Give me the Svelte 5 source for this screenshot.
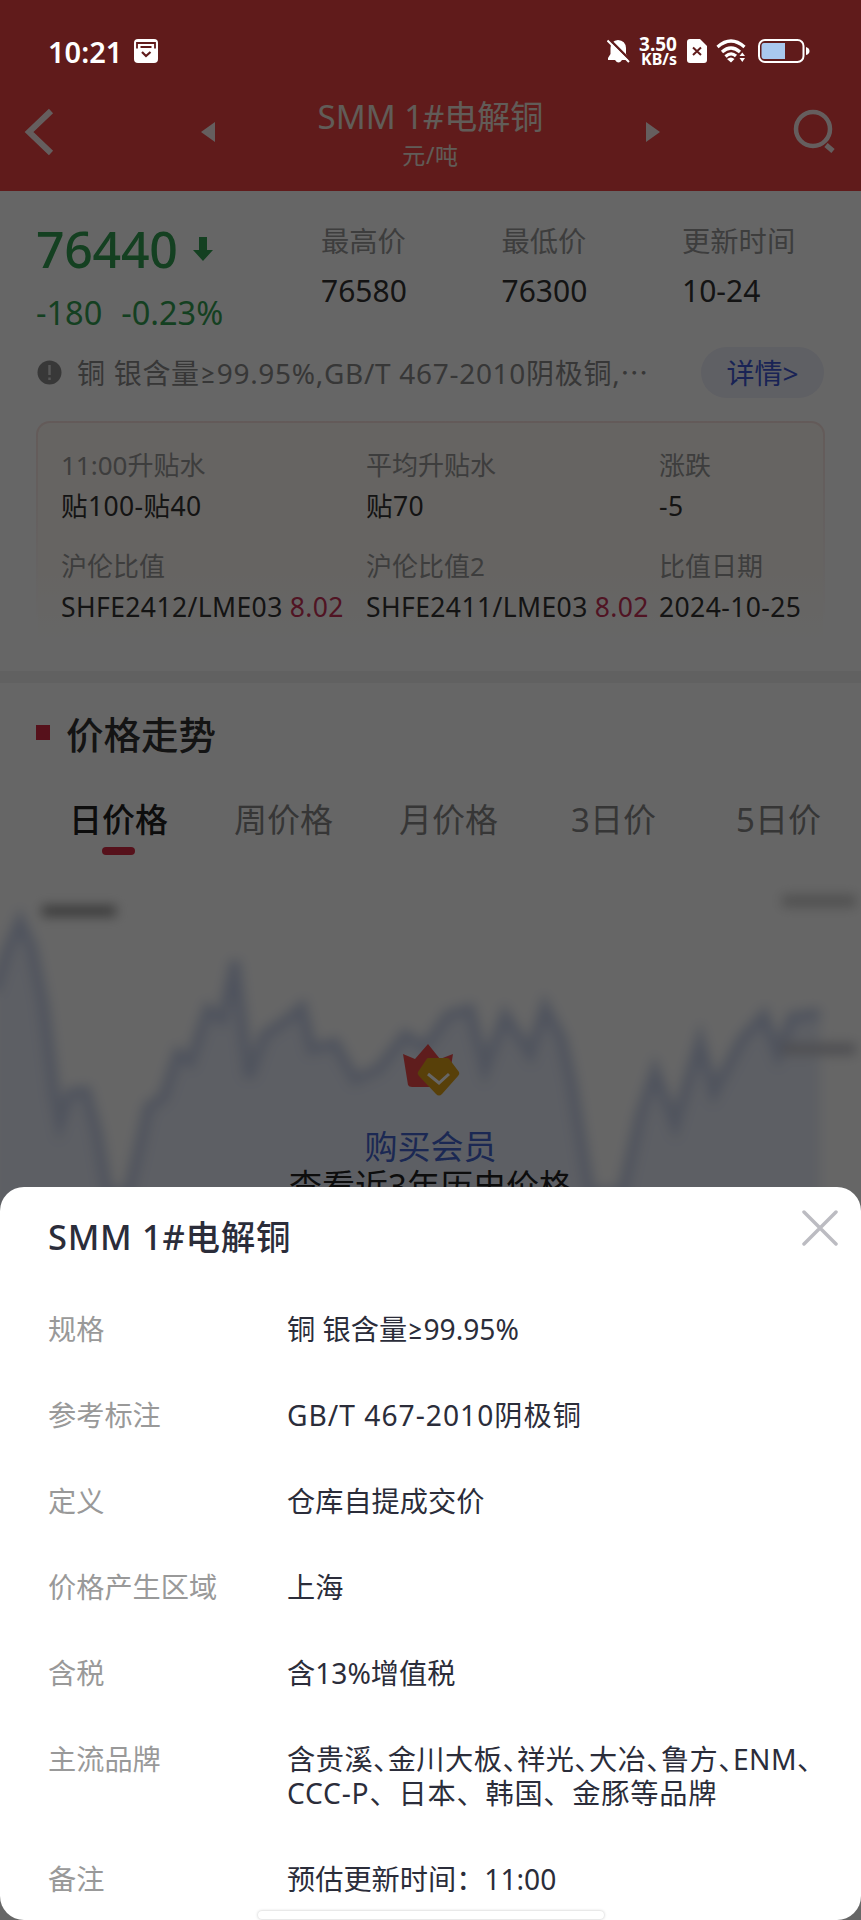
<script lang="ts">
  const stats = [
    { label: '最高价', value: '76580' },
    { label: '最低价', value: '76300' },
    { label: '更新时间', value: '10-24' }
  ];

  const premiums = [
    { label: '11:00升贴水', value: '贴100-贴40' },
    { label: '平均升贴水', value: '贴70' },
    { label: '涨跌', value: '-5' },
    { label: '沪伦比值', value: 'SHFE2412/LME03', ratio: '8.02' },
    { label: '沪伦比值2', value: 'SHFE2411/LME03', ratio: '8.02' },
    { label: '比值日期', value: '2024-10-25' }
  ];

  const tabs = ['日价格', '周价格', '月价格', '3日价', '5日价'];
  let activeTab = $state('日价格');

  const details = [
    { label: '规格', value: '铜 银含量≥99.95%' },
    { label: '参考标注', value: 'GB/T 467-2010阴极铜', wide: true },
    { label: '定义', value: '仓库自提成交价' },
    { label: '价格产生区域', value: '上海' },
    { label: '含税', value: '含13%增值税' }
  ];

  const brands = ['含贵溪', '金川大板', '祥光', '大冶', '鲁方', 'ENM'];

  // 走势图折线
  const line =
    'M-6 110 L6 72 L20 40 L32 66 L44 125 L55 215 L60 240 L70 212 L86 210 L97 250 L108 312 L128 312 L138 270 L148 226 L163 216 L178 172 L190 180 L208 128 L222 138 L235 80 L249 196 L264 154 L285 140 L302 126 L312 168 L335 162 L355 198 L378 188 L405 154 L425 166 L448 134 L470 128 L485 186 L505 134 L530 172 L545 126 L562 158 L572 202 L590 312 L622 312 L640 234 L655 190 L675 242 L700 160 L714 210 L742 158 L764 134 L778 172 L792 136 L820 132';
</script>

<div class="phone">
  <div class="page">
    <header class="header">
      <svg class="back" width="30" height="48" viewBox="0 0 30 48"><path d="M27 3 L5 24 L27 45" fill="none" stroke="#fff" stroke-width="6" /></svg>
      <svg class="prev" width="16" height="22" viewBox="0 0 16 22"><path d="M15 1 V21 L1 11 Z" fill="#fff" /></svg>
      <div class="heading">
        <div class="name">SMM 1#电解铜</div>
        <div class="unit">元/吨</div>
      </div>
      <svg class="next" width="16" height="22" viewBox="0 0 16 22"><path d="M1 1 V21 L15 11 Z" fill="#fff" /></svg>
      <svg class="search" width="42" height="46" viewBox="0 0 42 46">
        <circle cx="20" cy="20" r="17" fill="none" stroke="#fff" stroke-width="4.5" />
        <path d="M33 36 L40 42" stroke="#fff" stroke-width="5" />
      </svg>
    </header>

    <section class="quote">
      <div class="price-box">
        <div class="price">
          76440
          <svg width="20" height="24" viewBox="0 0 20 24"><path d="M6 0 H14 V13 H20 L10 24 L0 13 H6 Z" fill="currentColor" /></svg>
        </div>
        <div class="change"><span>-180</span><span>-0.23%</span></div>
      </div>
      {#each stats as stat}
        <div class="stat">
          <div class="stat-label">{stat.label}</div>
          <div class="stat-value">{stat.value}</div>
        </div>
      {/each}
    </section>

    <div class="note">
      <svg width="25" height="25" viewBox="0 0 25 25">
        <circle cx="12.5" cy="12.5" r="12" fill="#8c8c8c" />
        <path d="M12.5 5 V15 M12.5 17.5 V20" stroke="#ddd" stroke-width="2.4" />
      </svg>
      <div class="note-text">铜 银含量≥99.95%,GB/T 467-2010阴极铜,⋯</div>
      <button class="more">详情&gt;</button>
    </div>

    <section class="premium">
      {#each premiums as item}
        <div class="cell">
          <div class="cell-label">{item.label}</div>
          <div class="cell-value">
            {item.value}{#if item.ratio}<span class="ratio">{item.ratio}</span>{/if}
          </div>
        </div>
      {/each}
    </section>

    <div class="divider"></div>

    <section class="trend">
      <h2>价格走势</h2>
      <div class="tabs">
        {#each tabs as tab}
          <button class="tab" class:active={tab === activeTab} onclick={() => (activeTab = tab)}>{tab}</button>
        {/each}
      </div>
      <div class="chart">
        <svg class="plot" width="861" height="330" viewBox="0 0 861 330">
          <defs>
            <filter id="soft" x="-5%" y="-5%" width="110%" height="110%"><feGaussianBlur stdDeviation="6" /></filter>
          </defs>
          <g filter="url(#soft)">
            <path d="{line} V345 H-6 Z" fill="#e2e8f8" opacity="0.8" />
            <path d={line} fill="none" stroke="#a9b8de" stroke-width="11" opacity="0.6" />
            <rect x="42" y="25" width="74" height="10" fill="#888" />
            <rect x="782" y="14" width="74" height="12" fill="#c8c8c8" />
            <rect x="782" y="162" width="74" height="12" fill="#c4c4cc" />
          </g>
        </svg>
        <div class="vip">
          <svg width="58" height="54" viewBox="0 0 58 54">
            <path d="M1 11 L13 16 L26 1 L38 16 L51 11 L46 42 Q45 44 43 44 H10 Q7 44 6 42 Z" fill="#ee4a4a" />
            <path d="M26 15 H45 Q47 15 48 17 L57 29 Q58 31 56 33 L40 51 Q37 54 34 51 L17 33 Q15 31 16 29 L24 17 Q25 15 26 15 Z" fill="#dca018" />
            <path d="M26 31 L37 40 L47 31" fill="none" stroke="#fff" stroke-width="3" />
          </svg>
          <div class="buy">购买会员</div>
          <div class="history">查看近3年历史价格</div>
        </div>
      </div>
    </section>
    <div class="scrim"></div>
  </div>

  <div class="status">
    <span class="time">10:21</span>
    <svg class="app" width="24" height="24" viewBox="0 0 24 24">
      <rect width="24" height="24" rx="4" fill="#fff" />
      <path d="M3 9.5 V4 H21 V9.5 M6.500 8 H17.500" fill="none" stroke="#601b1b" stroke-width="1.8" />
      <path d="M8 13 L12 17 L16.500 13" fill="none" stroke="#601b1b" stroke-width="2.2" />
    </svg>
    <svg class="bell" width="23" height="25" viewBox="0 0 23 25">
      <path d="M11 1 Q18.500 1.500 19 9 V15 L21.500 19 V21 H15 Q11.500 26 8 21 H1 V19 L3.500 15 V9 Q4 1.500 11 1 Z" fill="#fff" />
      <path d="M2 0 L24 22" stroke="#601b1b" stroke-width="2.500" />
      <path d="M0.500 1.500 L22 23" stroke="#fff" stroke-width="2" />
    </svg>
    <span class="speed"><b>3.50</b><i>KB/s</i></span>
    <svg class="sim" width="20" height="24" viewBox="0 0 20 24">
      <path d="M3 0 H13 L20 7 V21 Q20 24 17 24 H3 Q0 24 0 21 V3 Q0 0 3 0 Z" fill="#fff" />
      <path d="M6 8.500 L14 16 M14 8.500 L6 16" stroke="#601b1b" stroke-width="2" />
    </svg>
    <svg class="wifi" width="30" height="24" viewBox="0 0 30 24">
      <path d="M1.500 8 Q15 -4 28.500 8 M6 13 Q15 5 24 13 M9.500 17.500 Q15 12.500 20 17" fill="none" stroke="#fff" stroke-width="3.200" />
      <path d="M11 20 Q15 17 18.500 20 L15 23.500 Z M23.500 17 L26.300 13.500 L29 17 Z M23.500 19 L26.300 23 L29 19 Z" fill="#fff" />
    </svg>
    <svg class="battery" width="52" height="24" viewBox="0 0 52 24">
      <rect x="1" y="1" width="44.500" height="22" rx="6" fill="none" stroke="#fff" stroke-width="2" />
      <path d="M6 4 H27 V20 H6 Q3.500 20 3.500 17 V7 Q3.500 4 6 4 Z" fill="#a9c8ee" />
      <path d="M48 8 Q51.500 9 51.500 12 Q51.500 15 48 16 Z" fill="#fff" />
    </svg>
  </div>

  <div class="sheet">
    <div class="sheet-head">
      <h3>SMM 1#电解铜</h3>
      <button class="close" aria-label="关闭">
        <svg width="36" height="36" viewBox="0 0 36 36"><path d="M2 2 L34 34 M34 2 L2 34" stroke="#bcbcc2" stroke-width="3.500" stroke-linecap="round" /></svg>
      </button>
    </div>
    <dl>
      {#each details as row}
        <div class="row"><dt>{row.label}</dt><dd class:wide={row.wide}>{row.value}</dd></div>
      {/each}
      <div class="row">
        <dt>主流品牌</dt>
        <dd>
          <div class="brands">{brands.join('、')}、</div>
          <div class="brands-more">CCC-P、日本、韩国、金豚等品牌</div>
        </dd>
      </div>
      <div class="row"><dt>备注</dt><dd>预估更新时间：11:00</dd></div>
    </dl>
    <div class="home-bar"></div>
  </div>
</div>

<style>
  :global(body) {
    background: #666;
  }

  .phone {
    position: relative;
    width: 861px;
    height: 1920px;
    overflow: hidden;
    background: #666;
    font-family: 'Noto Sans', Lato, 'Noto Sans CJK SC', sans-serif;
    color: #333;
  }

  .phone * {
    box-sizing: border-box;
  }

  button {
    padding: 0;
    border: none;
    background: none;
    font-family: inherit;
    cursor: pointer;
  }

  .page {
    position: relative;
    height: 1240px;
    background: #fff;
    overflow: hidden;
  }

  .scrim {
    position: absolute;
    inset: 0;
    background: rgba(0, 0, 0, 0.6);
  }

  .header {
    display: flex;
    align-items: center;
    height: 191px;
    padding: 72px 26px 0 24px;
    background: #f04444;
    color: #f2e6dc;
  }

  .prev {
    margin-left: 146px;
  }

  .heading {
    flex: 1;
    padding-top: 6px;
    text-align: center;
  }

  .name {
    font-size: 33px;
    line-height: 40px;
    white-space: nowrap;
  }

  .unit {
    font-size: 23px;
    line-height: 36px;
    letter-spacing: 0.6px;
  }

  .header svg {
    opacity: 0.9;
  }

  .search {
    margin-left: 132px;
  }

  .quote {
    display: flex;
    padding: 22px 0 0 36px;
    height: 152px;
  }

  .price-box {
    flex: none;
    width: 285px;
    color: #34a053;
  }

  .price {
    display: flex;
    align-items: center;
    gap: 15px;
    height: 72px;
    font-size: 50px;
    font-weight: 500;
    letter-spacing: -0.3px;
  }

  .change {
    display: flex;
    gap: 19px;
    font-size: 32.500px;
    line-height: 56px;
  }

  .stat {
    flex: none;
    width: 180.500px;
    white-space: nowrap;
  }

  .stat-label {
    font-size: 28.300px;
    line-height: 56px;
    color: #999;
  }

  .stat-value {
    font-size: 30px;
    line-height: 44px;
  }

  .note {
    display: flex;
    align-items: center;
    height: 58px;
    padding: 0 37px;
  }

  .note-text {
    flex: 1;
    margin-left: 15px;
    font-size: 28px;
    letter-spacing: 0.7px;
    color: #8a8a8a;
    white-space: nowrap;
  }

  .more {
    width: 123px;
    height: 51px;
    border-radius: 26px;
    background: #eeeffa;
    color: #4058d4;
    font-size: 28px;
  }

  .premium {
    display: grid;
    grid-template-columns: 305px 293px 1fr;
    grid-auto-rows: 101px;
    height: 226px;
    margin: 20px 36px 0;
    padding: 22px 0 0 23px;
    border-radius: 14px 14px 0 0;
    background: linear-gradient(#fffaf4, #fffaf4 60%, #fff) padding-box,
      linear-gradient(#f8e2de, #fff 90%) border-box;
    border: 2px solid transparent;
    border-bottom: none;
  }

  .cell {
    white-space: nowrap;
  }

  .cell-label {
    font-size: 26px;
    line-height: 40px;
    color: #999;
  }

  .cell-value {
    font-size: 26.500px;
    line-height: 43px;
    letter-spacing: 0.4px;
  }

  .ratio {
    margin-left: 7px;
    color: #c93258;
  }

  .divider {
    height: 12px;
    margin-top: 24px;
    background: #f2f2f2;
  }

  h2 {
    display: flex;
    align-items: center;
    gap: 16px;
    height: 98px;
    margin: 0 36px;
    font-size: 37.500px;
    font-weight: 500;
  }

  h2::before {
    content: '';
    width: 14px;
    height: 15px;
    background: #d62c44;
  }

  .tabs {
    display: flex;
    height: 100px;
    padding: 3px 0 0 36px;
  }

  .tab {
    position: relative;
    flex: none;
    width: 165px;
    height: 68px;
    font-size: 33px;
    color: #888;
  }

  .tab.active {
    color: #222;
    font-weight: 500;
  }

  .tab.active::after {
    content: '';
    position: absolute;
    left: 66px;
    bottom: -3px;
    width: 33px;
    height: 8px;
    border-radius: 4px;
    background: #d62c44;
  }

  .chart {
    position: relative;
  }

  .plot {
    position: absolute;
    top: 0;
    left: 0;
  }

  .vip {
    position: relative;
    display: flex;
    flex-direction: column;
    align-items: center;
    padding-top: 162px;
    font-size: 33px;
    line-height: 39px;
  }

  .buy {
    margin-top: 30px;
    color: #4464d0;
  }

  .history {
    color: #222;
  }

  .status {
    position: absolute;
    top: 0;
    left: 0;
    display: flex;
    align-items: center;
    width: 861px;
    height: 102px;
    padding-left: 48px;
    color: #fff;
  }

  .time {
    width: 86px;
    font-size: 29px;
    font-weight: 600;
  }

  .bell {
    margin-left: 449px;
  }

  .speed {
    display: flex;
    flex-direction: column;
    align-items: flex-end;
    width: 47px;
    margin-top: 2px;
    line-height: 15.500px;
  }

  .speed b {
    font-size: 19px;
    font-weight: 700;
  }

  .speed i {
    font-size: 16px;
    font-style: normal;
    font-weight: 700;
  }

  .sim {
    margin-left: 10px;
  }

  .wifi {
    margin-left: 9px;
  }

  .battery {
    margin-left: 12px;
  }

  .sheet {
    position: absolute;
    left: 0;
    top: 1187px;
    width: 861px;
    height: 733px;
    padding: 0 23px 0 48px;
    border-radius: 24px;
    background: #fff;
    color: #2b2d3a;
  }

  .sheet-head {
    display: flex;
    justify-content: space-between;
    height: 125px;
  }

  h3 {
    margin: 24px 0 0;
    font-size: 34.500px;
    font-weight: 500;
    line-height: 52px;
    letter-spacing: 0.7px;
  }

  .close {
    height: 36px;
    margin-top: 23px;
  }

  dl {
    display: flex;
    flex-direction: column;
    gap: 52px;
    margin: 0;
  }

  .row {
    display: flex;
    font-size: 28.200px;
    line-height: 34px;
    white-space: nowrap;
  }

  dt {
    width: 239px;
    color: #999;
  }

  dd {
    margin: 0;
  }

  .wide {
    letter-spacing: 1px;
  }

  .brands {
    font-feature-settings: 'halt';
    letter-spacing: 0.5px;
  }

  .brands-more {
    letter-spacing: 0.8px;
  }

  .home-bar {
    position: absolute;
    left: 258px;
    bottom: 1px;
    width: 346px;
    height: 8px;
    border-radius: 4px;
    background: #fff;
    box-shadow: 0 0 3px rgba(0, 0, 0, 0.25);
  }
</style>
